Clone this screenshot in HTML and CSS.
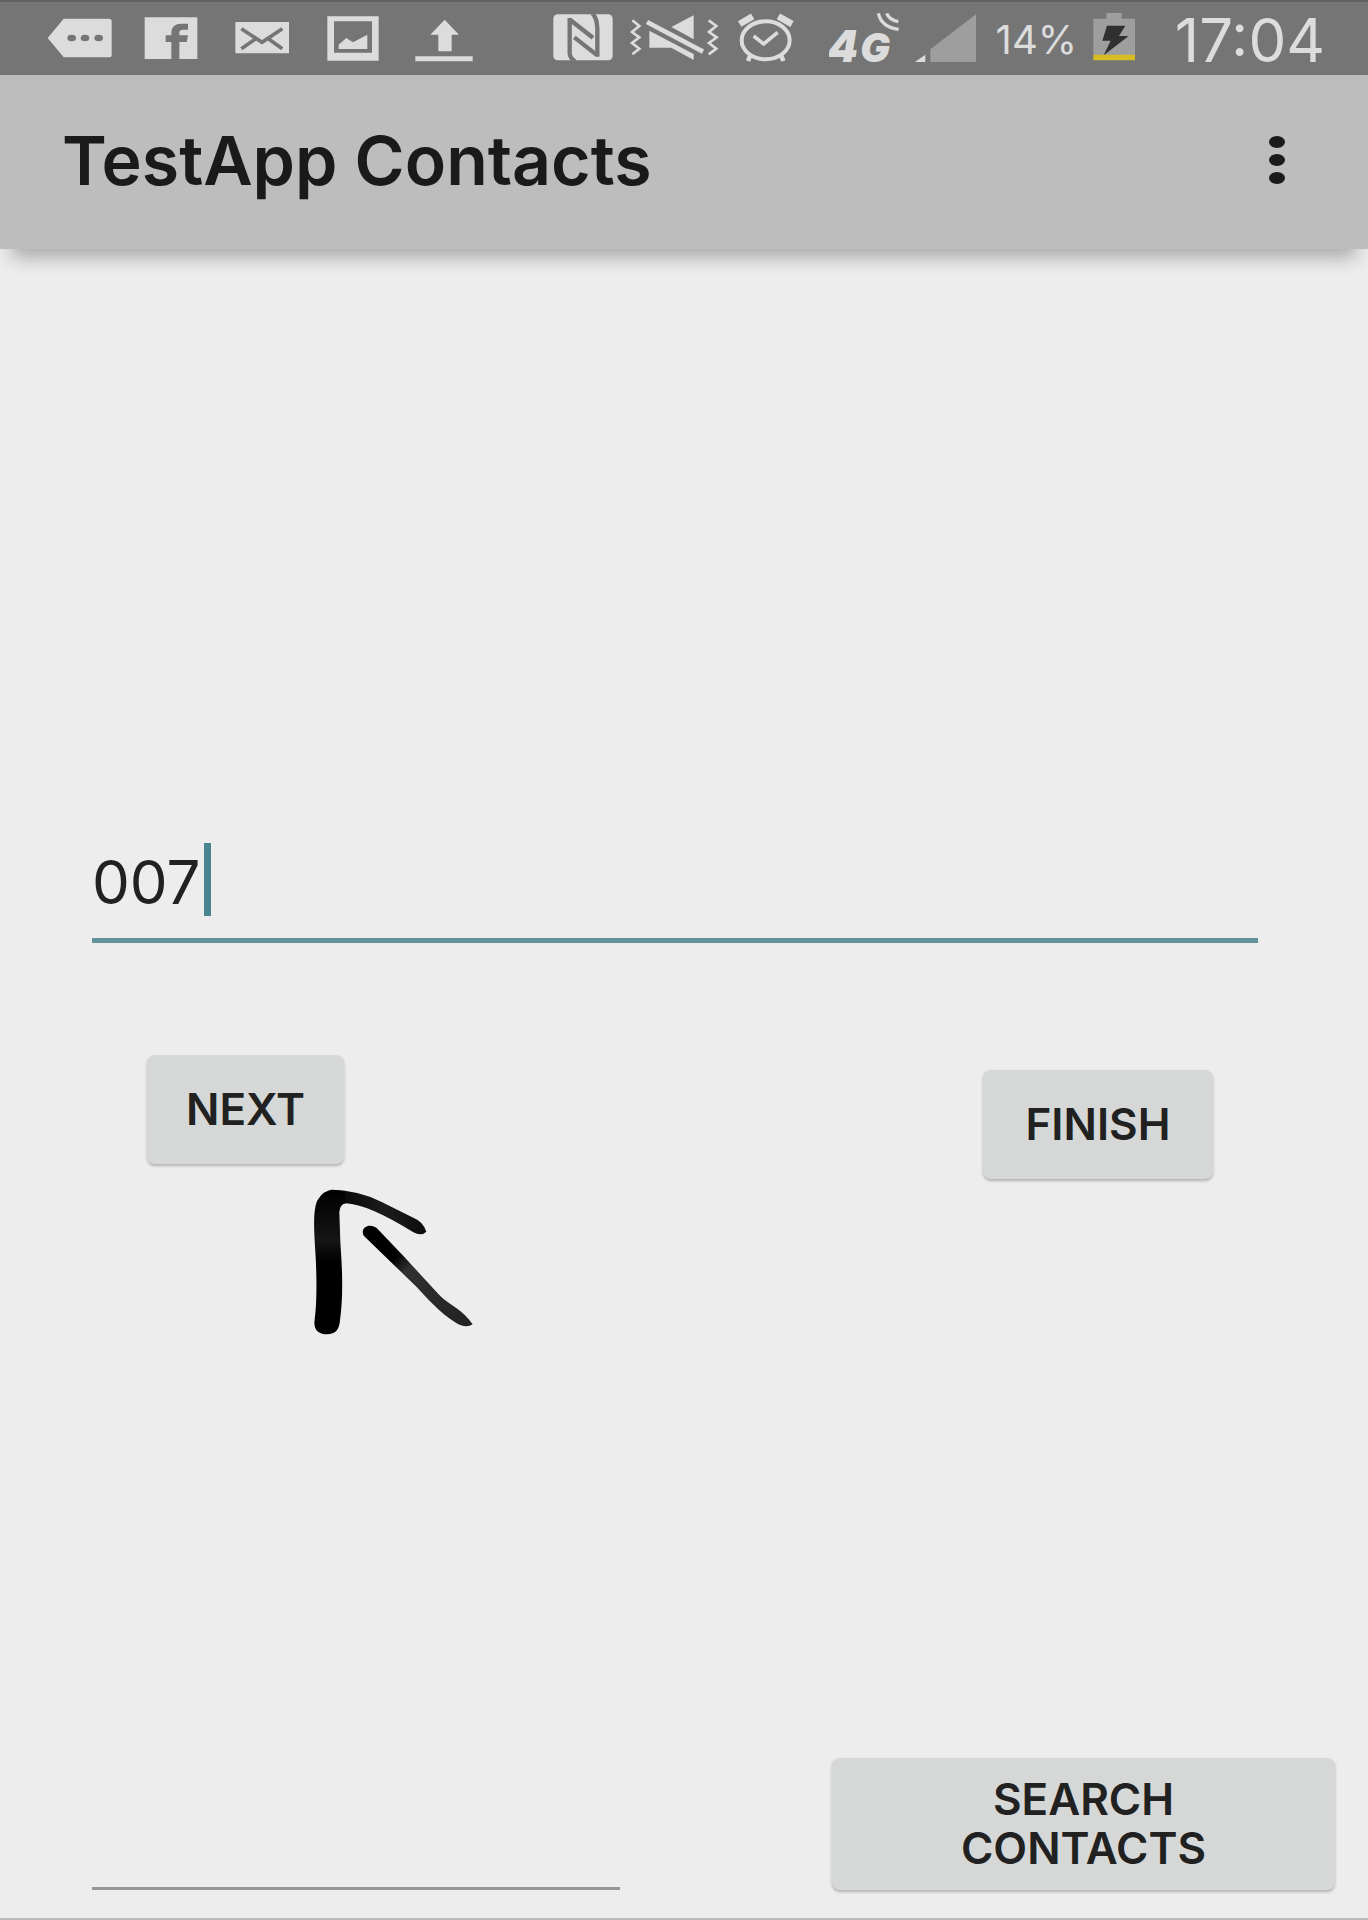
FILE: index.html
```html
<!DOCTYPE html>
<html lang="en">
<head>
<meta charset="utf-8">
<meta name="viewport" content="width=device-width, initial-scale=1">
<title>TestApp Contacts</title>
<link rel="stylesheet" href="styles.css">
</head>
<body>
<div class="status-bar">
  <div class="notifications">
    <svg class="note-icon" viewBox="142 0 198 225" aria-hidden="true"><path fill="#dcdcdc" d="M192 56H328Q336 56 336 64V164Q336 172 328 172H192L144 114Z"/><g fill="#757575"><ellipse cx="216" cy="114" rx="13" ry="10"/><ellipse cx="256" cy="114" rx="13" ry="10"/><ellipse cx="297" cy="114" rx="13" ry="10"/></g></svg>
    <svg class="note-icon" viewBox="414 0 198 225" aria-hidden="true"><path fill="#dcdcdc" d="M434 52H592V177H538V126H560L564 106H538V98Q538 89 549 89H564V71H545Q514 71 514 98V106H497V126H514V177H434Z"/></svg>
    <svg class="note-icon" viewBox="689 0 198 225" aria-hidden="true"><path fill="#dcdcdc" d="M708 66H869V160H708Z"/><path d="M726 86L788 127L849 86M726 146L768 117M849 146L808 117" fill="none" stroke="#757575" stroke-width="11"/></svg>
    <svg class="note-icon" viewBox="962 0 198 225" aria-hidden="true"><path fill="#dcdcdc" fill-rule="evenodd" d="M984 49H1138V182H984ZM1004 64V158H1118V64Z"/><path fill="#dcdcdc" d="M1018 147V134L1041 114L1061 127L1104 104V147Z"/></svg>
    <svg class="note-icon" viewBox="1235 0 198 225" aria-hidden="true"><path fill="#dcdcdc" d="M1336 59L1379 104H1357V154H1317V104H1293ZM1248 169H1420V184H1248Z"/></svg>
  </div>
  <div class="indicators">
    <svg class="nfc" viewBox="68 0 180 225" aria-hidden="true"><rect x="69" y="43" width="178" height="138" rx="13" fill="#dcdcdc"/><path d="M118 54V160Q119 174 134 184M117 58L188 113M201 170V86Q200 54 186 40M201 166L132 112" fill="none" stroke="#757575" stroke-width="13"/></svg>
    <svg class="vibrate" viewBox="297 0 276 225" aria-hidden="true"><g fill="#dcdcdc"><path d="M424 81L491 46V118ZM358 92L491 162V180L424 143H358Z"/></g><path d="M351 66L519 155" stroke="#757575" stroke-width="27"/><path d="M351 66L519 155" stroke="#dcdcdc" stroke-width="14"/><path d="M307 61L328 78L306 96L328 112L306 129L328 146L307 163M536 61L559 78L537 96L560 112L537 129L559 146L536 163" fill="none" stroke="#dcdcdc" stroke-width="8"/></svg>
    <svg class="alarm" viewBox="619 0 228 225" aria-hidden="true"><g fill="none" stroke="#dcdcdc"><ellipse cx="705" cy="121" rx="72" ry="57" stroke-width="12"/><path d="M669 108L699 132L741 97" stroke-width="11"/><path d="M627 72L666 49M743 49L784 72" stroke-width="20"/><path d="M658 168L652 183M752 168L758 183" stroke-width="14"/></g></svg>
    <svg class="network" viewBox="896 0 210 225" role="img" aria-label="4G"><text class="network-label" x="892" y="186" font-size="130">4</text><text class="network-label" x="990" y="186" font-size="118">G</text><path d="M1044 40Q1054 82 1105 88M1069 40Q1077 60 1104 65" fill="none" stroke="#dcdcdc" stroke-width="10"/></svg>
    <svg class="signal" viewBox="40 0 186 225" aria-hidden="true"><path fill="#9e9e9e" d="M86 186V148L223 43V186Z"/><path fill="#dcdcdc" d="M40 186L71 164V186Z"/></svg>
    <span class="charge">14%</span>
    <svg class="battery" viewBox="576 0 126 225" aria-hidden="true"><path fill="#9e9e9e" d="M577 56H616V39H662V56H702V165H577Z"/><path fill="#d8bd22" d="M577 164H702V181H577Z"/><path fill="#303030" d="M618 77H673L654 108H683L608 166L629 122H604Z"/></svg>
    <time class="clock">17:04</time>
  </div>
</div>
<header class="app-bar">
  <h1 class="title">TestApp Contacts</h1>
  <button class="more" type="button" aria-label="More options"><span class="dot"></span><span class="dot"></span><span class="dot"></span></button>
</header>
<main class="content">
  <div class="field">
    <input class="field-input" type="text" value="007" aria-label="Contact number">
    <span class="caret"></span>
  </div>
  <div class="actions">
    <div class="next-wrap">
      <button class="btn btn-next" type="button">NEXT</button>
      <svg class="arrow" viewBox="570 470 510 450" aria-hidden="true">
        <defs>
          <linearGradient id="ink" x1="0" y1="0" x2="0" y2="1"><stop offset="0"/><stop offset=".35" stop-color="#151515"/><stop offset=".5"/></linearGradient>
          <linearGradient id="ink-tip" x1="0" y1="0" x2="1" y2="0"><stop offset="0"/><stop offset=".6" stop-color="#1c1c1c"/><stop offset="1" stop-color="#0c0c0c"/></linearGradient>
          <linearGradient id="ink-tail" x1="0" y1="0" x2="1" y2="1"><stop offset=".3"/><stop offset=".42" stop-color="#303030"/><stop offset="1" stop-color="#222"/></linearGradient>
        </defs>
        <path fill="url(#ink-tip)" d="M632 478Q720 480 785 515L880 562Q910 574 919 604Q904 619 880 606Q745 522 677 519Q658 520 655 550L610 530Z"/>
        <path fill="url(#ink)" d="M640 478Q610 478 591 512C578 545 582 600 587 680C591 760 590 820 584 868C579 900 597 912 621 912C647 912 658 898 660 870C671 790 666 705 661 635L658 545Q660 520 680 518L672 482Z"/>
        <path fill="url(#ink-tail)" d="M728 605C730 584 758 580 775 598L851 678L960 796C990 825 1030 839 1058 882Q1038 897 1004 875C960 848 920 802 890 770L735 620Q728 614 728 605Z"/>
      </svg>
    </div>
    <button class="btn btn-finish" type="button">FINISH</button>
  </div>
  <div class="search">
    <input class="search-input" type="text" aria-label="Search term">
    <button class="btn" type="button">SEARCH<br>CONTACTS</button>
  </div>
</main>
</body>
</html>
```
FILE: styles.css
```css
* {
  box-sizing: border-box;
}

body {
  display: flex;
  flex-direction: column;
  min-height: 100vh;
  margin: 0;
  background: #ededed;
  border-bottom: 2px solid #bcbcbc;
  color: #212121;
  font-family: Inter, Roboto, sans-serif;
}

.status-bar {
  display: flex;
  justify-content: space-between;
  height: 75px;
  padding: 0 43px 0 47px;
  background: linear-gradient(#606060 2px, #757575 2px);
  color: #dcdcdc;
}

.status-bar svg {
  display: block;
  flex: none;
  height: 75px;
}

.notifications {
  display: flex;
  gap: 25px;
}

.note-icon {
  width: 66px;
}

.indicators {
  display: flex;
  gap: 16px;
}

.nfc {
  width: 60px;
}

.vibrate {
  width: 92px;
}

.alarm {
  width: 76px;
}

.network {
  width: 70px;
}

.network-label {
  fill: #dcdcdc;
  font-style: italic;
  font-weight: 900;
}

.signal {
  width: 62px;
}

.charge {
  width: 84px;
  font-size: 40px;
  line-height: 80px;
  text-align: right;
}

.battery {
  width: 42px;
}

.clock {
  width: 174px;
  font-size: 60px;
  line-height: 80px;
  text-align: right;
}

.app-bar {
  display: flex;
  align-items: center;
  justify-content: space-between;
  height: 174px;
  padding: 0 68px 4px 62px;
  background: #bdbdbd;
  box-shadow: 0 20px 18px -12px rgba(0, 0, 0, 0.3);
}

.title {
  margin: 0;
  color: #1a1a1a;
  font-size: 68px;
  font-weight: 600;
  line-height: 80px;
}

.more {
  display: flex;
  flex-direction: column;
  gap: 6px;
  padding: 8px 15px;
  border: 0;
  background: none;
}

.dot {
  width: 16px;
  height: 12px;
  border-radius: 50%;
  background: #1a1a1a;
}

.content {
  display: flex;
  flex: 1;
  flex-direction: column;
  padding: 590px 33px 28px 92px;
}

.field {
  position: relative;
  margin-right: 77px;
}

.field-input {
  display: block;
  width: 100%;
  height: 104px;
  padding: 0 0 14px;
  border: 0;
  border-bottom: 5px solid #64929b;
  outline: 0;
  background: none;
  color: inherit;
  font: 400 60px/80px Inter, Roboto, sans-serif;
}

.caret {
  position: absolute;
  top: 4px;
  left: 112px;
  width: 7px;
  height: 73px;
  background: #4b8491;
}

.actions {
  display: flex;
  justify-content: space-between;
  margin-top: 112px;
  padding: 0 122px 0 55px;
}

.next-wrap {
  position: relative;
}

.btn {
  min-height: 109px;
  padding: 0 16px;
  border: 0;
  border-radius: 8px;
  background: #d6d8d7;
  box-shadow: 0 2px 3px rgba(0, 0, 0, 0.25);
  color: #212121;
  font: 600 44px/49px Inter, Roboto, sans-serif;
}

.btn-next {
  min-width: 197px;
}

.btn-finish {
  min-width: 230px;
  margin-top: 15px;
}

.arrow {
  position: absolute;
  top: 132px;
  left: 163px;
  width: 170px;
  height: 150px;
}

.search {
  display: grid;
  grid-template-columns: 528fr 503fr;
  gap: 212px;
  margin-top: auto;
}

.search .btn {
  min-height: 132px;
}

.search-input {
  width: 100%;
  padding: 0;
  border: 0;
  border-bottom: 3px solid #969696;
  outline: 0;
  background: none;
  color: inherit;
  font: 400 60px/80px Inter, Roboto, sans-serif;
}
```
